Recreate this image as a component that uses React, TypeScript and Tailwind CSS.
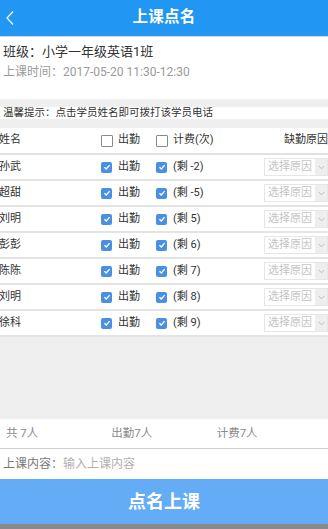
import React from 'react';

type Student = { name: string; left: string };

const students: Student[] = [
  { name: '孙武', left: '(剩 -2)' },
  { name: '超甜', left: '(剩 -5)' },
  { name: '刘明', left: '(剩 5)' },
  { name: '彭彭', left: '(剩 6)' },
  { name: '陈陈', left: '(剩 7)' },
  { name: '刘明', left: '(剩 8)' },
  { name: '徐科', left: '(剩 9)' },
];

const CheckBox = ({ checked }: { checked: boolean }) =>
  checked ? (
    <span className="w-[11px] h-[11px] rounded-[2px] bg-[#4a90e2] flex items-center justify-center shrink-0">
      <svg width="8" height="8" viewBox="0 0 10 10">
        <path d="M1.8 5.2 L4.1 7.4 L8.3 2.6" fill="none" stroke="#fff" strokeWidth="1.7" />
      </svg>
    </span>
  ) : (
    <span className="w-[12px] h-[12px] rounded-[1px] border border-[#8a8a8a] bg-white shrink-0" />
  );

const ReasonSelect = () => (
  <div className="flex h-[18px] w-[64px] border border-[#e6e6e6] bg-white">
    <span className="flex-1 pl-[3px] text-[11px] leading-[16px] text-[#c4c4c4] whitespace-nowrap overflow-hidden">选择原因</span>
    <span className="w-[12px] bg-[#eeeeee] flex items-center justify-center">
      <svg width="7" height="5" viewBox="0 0 7 5">
        <path d="M0.8 1 L3.5 3.8 L6.2 1" fill="none" stroke="#b8b8b8" strokeWidth="0.9" />
      </svg>
    </span>
  </div>
);

export default function App() {
  return (
    <div
      className="w-[328px] h-[529px] overflow-hidden bg-[#efefef] flex flex-col"
      style={{ fontFamily: 'Roboto, "Noto Sans CJK SC", sans-serif' }}
    >
      {/* Title bar */}
      <div className="h-[37px] bg-[#2196f3] relative flex items-center justify-center border-b border-[#d8d8d8] shrink-0">
        <svg className="absolute left-[5px] top-[10px]" width="10" height="16" viewBox="0 0 10 16">
          <path d="M8 1.5 L2 8 L8 14.5" fill="none" stroke="#fff" strokeWidth="1.2" />
        </svg>
        <span className="text-white text-[15.5px] font-bold tracking-[0.3px]">上课点名</span>
      </div>

      {/* Class info */}
      <div className="h-[62px] bg-white px-[3px] pt-[5px] shrink-0">
        <div className="text-[13px] leading-[20px] text-[#333]">班级：小学一年级英语1班</div>
        <div className="text-[12px] leading-[20px] text-[#9a9a9a]">上课时间：2017-05-20 11:30-12:30</div>
      </div>

      {/* Tip */}
      <div className="mt-[8px] h-[12px] bg-white px-[3px] flex items-center shrink-0">
        <span className="text-[10.5px] leading-[12px] text-[#333] whitespace-nowrap">温馨提示：点击学员姓名即可拨打该学员电话</span>
      </div>

      {/* Table */}
      <div className="mt-[9px] bg-white shrink-0">
        <div className="h-[27px] grid grid-cols-[101px_55px_108px_64px] items-center border-b-2 border-[#e2e2e2] text-[11px] text-[#333]">
          <span className="-ml-[1px]">姓名</span>
          <span className="flex items-center gap-[5px]">
            <CheckBox checked={false} />
            出勤
          </span>
          <span className="flex items-center gap-[5px]">
            <CheckBox checked={false} />
            计费(次)
          </span>
          <span className="justify-self-end whitespace-nowrap">缺勤原因</span>
        </div>
        {students.map((s, i) => (
          <div
            key={i}
            className="h-[26px] grid grid-cols-[101px_55px_108px_64px] items-center border-b-2 border-[#e4e4e4] text-[11px] text-[#333]"
          >
            <span className="-ml-[1px]">{s.name}</span>
            <span className="flex items-center gap-[6px]">
              <CheckBox checked />
              出勤
            </span>
            <span className="flex items-center gap-[6px]">
              <CheckBox checked />
              {s.left}
            </span>
            <ReasonSelect />
          </div>
        ))}
      </div>

      <div className="flex-1" />

      {/* Summary */}
      <div className="h-[30px] bg-white grid grid-cols-3 px-[6px] items-center border-b border-[#d0d0d0] text-[11.5px] text-[#8a8a8a] shrink-0">
        <span>共 7人</span>
        <span>出勤7人</span>
        <span>计费7人</span>
      </div>

      {/* Content input */}
      <div className="h-[30px] bg-white flex items-center px-[3px] text-[12px] shrink-0">
        <span className="text-[#777]">上课内容：</span>
        <span className="text-[#b0b0b0]">输入上课内容</span>
      </div>

      {/* Submit */}
      <div className="h-[45px] bg-[#64acf5] flex items-center justify-center shrink-0">
        <span className="text-white text-[18px] font-bold">点名上课</span>
      </div>
      <div className="h-[5px] bg-[#8a8a8a] shrink-0" />
    </div>
  );
}
